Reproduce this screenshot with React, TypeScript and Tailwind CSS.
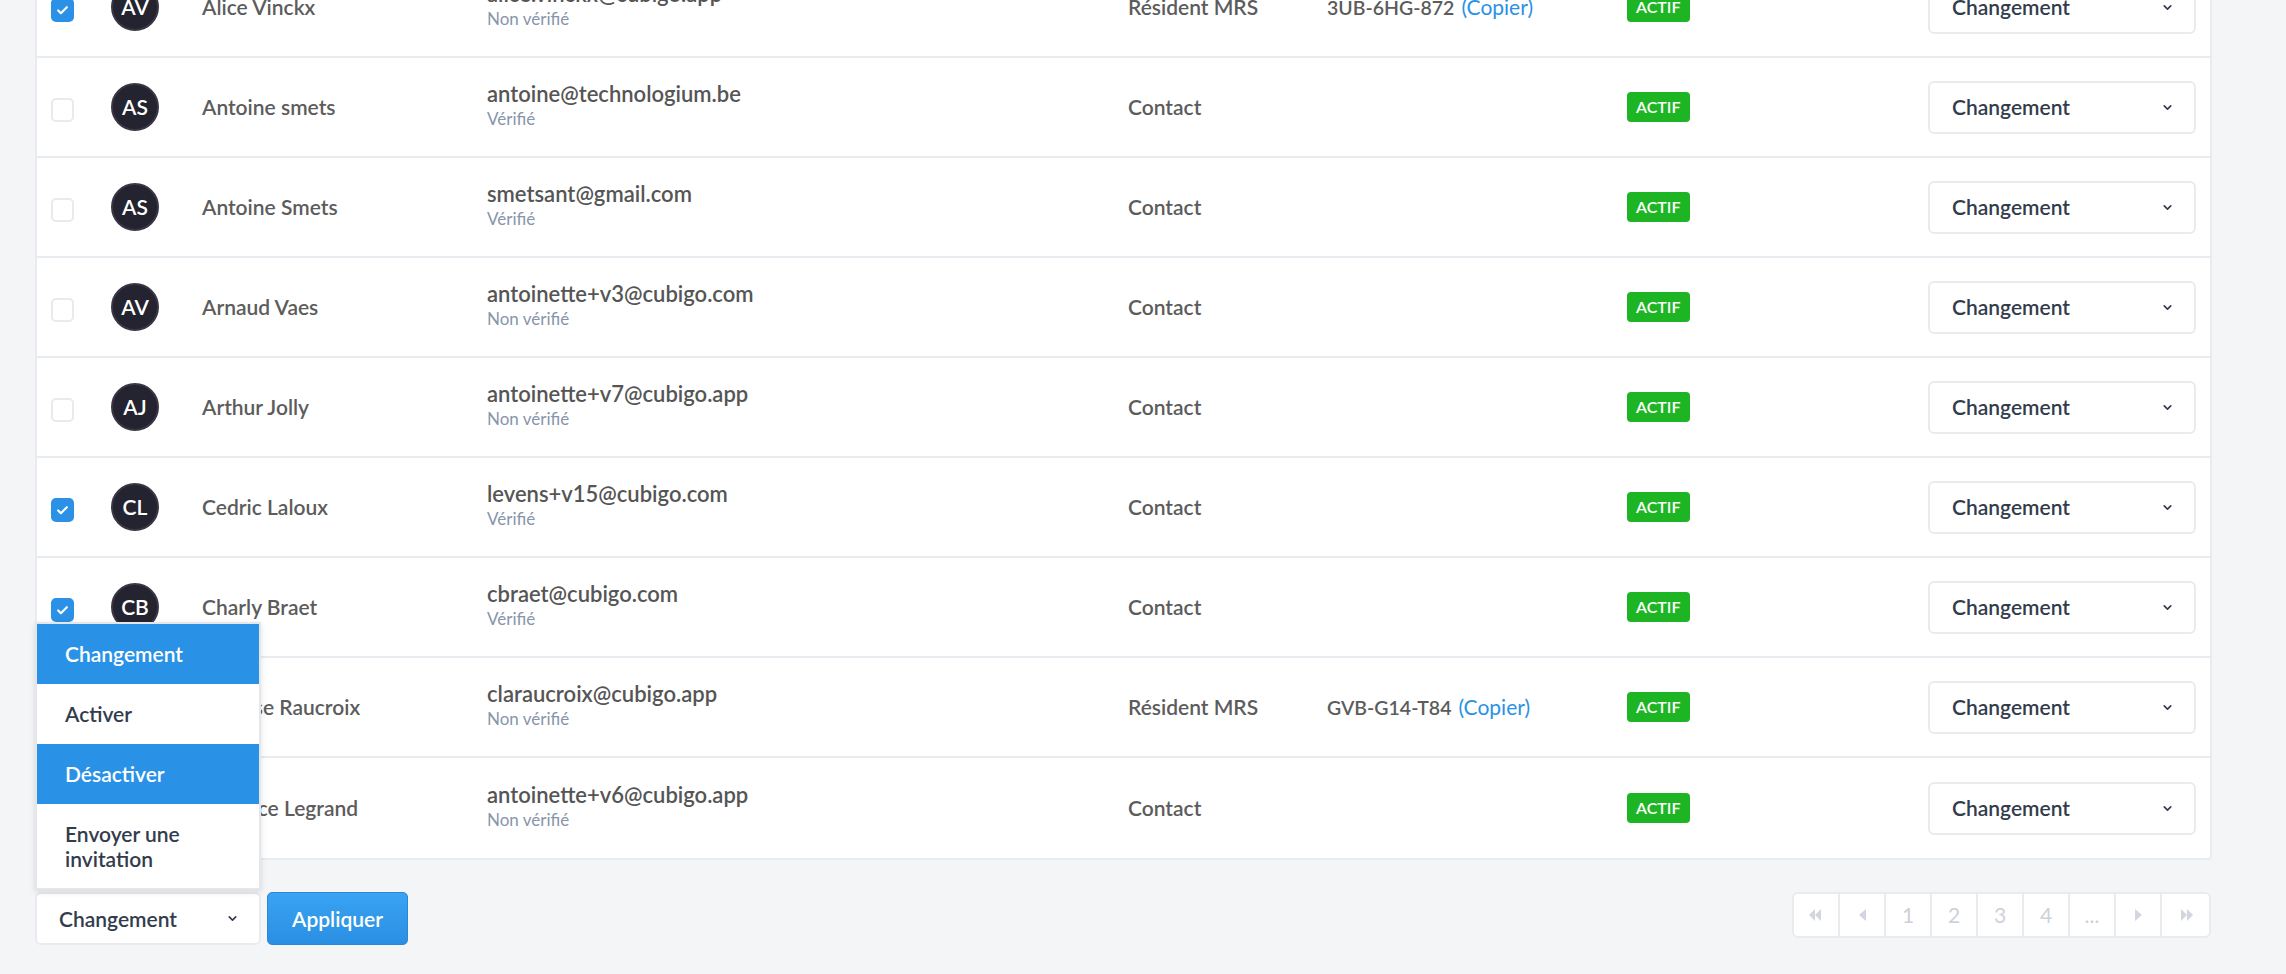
import { Check, ChevronDown } from 'lucide-react'

type Row = {
  initials: string
  name: string
  email: string
  verified: boolean
  role: string
  code?: string
  checked: boolean
}

const rows: Row[] = [
  { initials: 'AV', name: 'Alice Vinckx', email: 'alice.vinckx@cubigo.app', verified: false, role: 'Résident MRS', code: '3UB-6HG-872', checked: true },
  { initials: 'AS', name: 'Antoine smets', email: 'antoine@technologium.be', verified: true, role: 'Contact', checked: false },
  { initials: 'AS', name: 'Antoine Smets', email: 'smetsant@gmail.com', verified: true, role: 'Contact', checked: false },
  { initials: 'AV', name: 'Arnaud Vaes', email: 'antoinette+v3@cubigo.com', verified: false, role: 'Contact', checked: false },
  { initials: 'AJ', name: 'Arthur Jolly', email: 'antoinette+v7@cubigo.app', verified: false, role: 'Contact', checked: false },
  { initials: 'CL', name: 'Cedric Laloux', email: 'levens+v15@cubigo.com', verified: true, role: 'Contact', checked: true },
  { initials: 'CB', name: 'Charly Braet', email: 'cbraet@cubigo.com', verified: true, role: 'Contact', checked: true },
  { initials: 'CR', name: 'Clarisse Raucroix', email: 'claraucroix@cubigo.app', verified: false, role: 'Résident MRS', code: 'GVB-G14-T84', checked: false },
  { initials: 'BL', name: 'Béatrice Legrand', email: 'antoinette+v6@cubigo.app', verified: false, role: 'Contact', checked: false },
]

function Checkbox({ checked }: { checked: boolean }) {
  if (checked) {
    return (
      <div className="w-[23px] h-[24px] rounded-[5px] bg-[#2a91e6] flex items-center justify-center">
        <Check size={13} strokeWidth={4} className="text-white" />
      </div>
    )
  }
  return <div className="w-[23px] h-[24px] rounded-[5px] border-2 border-[#e8eaee] bg-white" />
}

function SelectBox({ width }: { width: string }) {
  return (
    <div className={`${width} h-[53px] rounded-[6px] border-2 border-[#e9ebef] bg-white flex items-center justify-between pl-[22px] pr-[20px]`}>
      <span className="text-[21px] font-semibold text-[#333c4c]">Changement</span>
      <ChevronDown size={13} strokeWidth={3} className="text-[#333c4c]" />
    </div>
  )
}

function Pager() {
  const cell = 'w-[46px] h-[42px] flex items-center justify-center border-r-2 border-[#e9ebef] text-[21px] text-[#cdd1da]'
  return (
    <div className="flex rounded-[6px] border-2 border-[#e9ebef] bg-white overflow-hidden">
      <div className={cell}>
        <svg width="14" height="12" viewBox="0 0 14 12" fill="#d3d6de">
          <path d="M6 0 L0 6 L6 12 Z" />
          <path d="M12 0 L6 6 L12 12 Z" />
        </svg>
      </div>
      <div className={cell}>
        <svg width="7" height="12" viewBox="0 0 7 12" fill="#d3d6de">
          <path d="M7 0 L0 6 L7 12 Z" />
        </svg>
      </div>
      <div className={`${cell} text-[#2d3748]`}>1</div>
      <div className={cell}>2</div>
      <div className={cell}>3</div>
      <div className={cell}>4</div>
      <div className={cell}>...</div>
      <div className={cell}>
        <svg width="7" height="12" viewBox="0 0 7 12" fill="#d3d6de">
          <path d="M0 0 L7 6 L0 12 Z" />
        </svg>
      </div>
      <div className="w-[47px] h-[42px] flex items-center justify-center">
        <svg width="14" height="12" viewBox="0 0 14 12" fill="#d3d6de">
          <path d="M2 0 L8 6 L2 12 Z" />
          <path d="M8 0 L14 6 L8 12 Z" />
        </svg>
      </div>
    </div>
  )
}

export default function App() {
  return (
    <div className="h-[974px] overflow-hidden bg-[#f4f5f7] font-['Lato','Open_Sans',sans-serif]">
      <div className="pl-[35px] pr-[74px]">
        {/* Table card (scrolled) */}
        <div className="-mt-[42px] bg-white border-2 border-t-0 border-[#e8ebf0] rounded-b-[4px]">
          {rows.map((row, i) => (
            <div
              key={i}
              className={`h-[100px] flex items-center ${i < rows.length - 1 ? 'border-b-2 border-[#e8ebf0]' : ''}`}
            >
              <div className="w-[74px] pl-[14px] pt-[6px]">
                <Checkbox checked={row.checked} />
              </div>
              <div className="w-[91px]">
                <div className="w-[48px] h-[48px] rounded-full bg-[#23242f] border-2 border-[#3b3646] flex items-center justify-center text-white text-[21px] font-semibold">
                  {row.initials}
                </div>
              </div>
              <div className="w-[285px] text-[21px] font-semibold text-[#5c5c5c]">{row.name}</div>
              <div className="w-[641px] flex flex-col pb-[4px]">
                <span className="text-[22px] font-semibold text-[#555] leading-[28px]">{row.email}</span>
                <span className="text-[17px] text-[#8795ab] leading-[22px]">{row.verified ? 'Vérifié' : 'Non vérifié'}</span>
              </div>
              <div className="w-[199px] text-[21px] font-semibold text-[#5c5c5c]">{row.role}</div>
              <div className="w-[300px] flex items-baseline gap-[7px] text-[#5c5c5c]">
                {row.code && (
                  <>
                    <span className="text-[19.5px] font-semibold">{row.code}</span>
                    <span className="text-[21px] text-[#2a91e6]">(Copier)</span>
                  </>
                )}
              </div>
              <div className="w-[301px]">
                <span className="inline-flex items-center h-[30px] px-[9px] rounded-[4px] bg-[#1eb524] text-white text-[16px] font-semibold">
                  ACTIF
                </span>
              </div>
              <SelectBox width="w-[268px]" />
            </div>
          ))}
        </div>

        {/* Footer: bulk actions + pagination */}
        <div className="mt-[32px] flex items-center justify-between">
          <div className="flex items-center gap-[6px]">
            <div className="relative">
              <SelectBox width="w-[226px]" />
              <div className="absolute left-0 bottom-full mb-[2px] w-[226px] bg-white border-2 border-[#e4e6ea] shadow-[0_2px_6px_rgba(0,0,0,0.12)]">
                <div className="h-[60px] flex items-center px-[28px] bg-[#2a92e6] text-white text-[21px] font-semibold">Changement</div>
                <div className="h-[60px] flex items-center px-[28px] text-[#333c4c] text-[21px] font-semibold">Activer</div>
                <div className="h-[60px] flex items-center px-[28px] bg-[#2a92e6] text-white text-[21px] font-semibold">Désactiver</div>
                <div className="h-[84px] flex items-center px-[28px] text-[#333c4c] text-[21px] font-semibold leading-[25px]">
                  Envoyer une invitation
                </div>
              </div>
            </div>
            <button className="h-[53px] px-[24px] rounded-[5px] bg-gradient-to-b from-[#3aa3f2] to-[#2a8fe3] border border-[#2a86d6] text-white text-[21px] font-semibold">
              Appliquer
            </button>
          </div>
          <div className="mr-[1px] self-start">
            <Pager />
          </div>
        </div>
      </div>
    </div>
  )
}
